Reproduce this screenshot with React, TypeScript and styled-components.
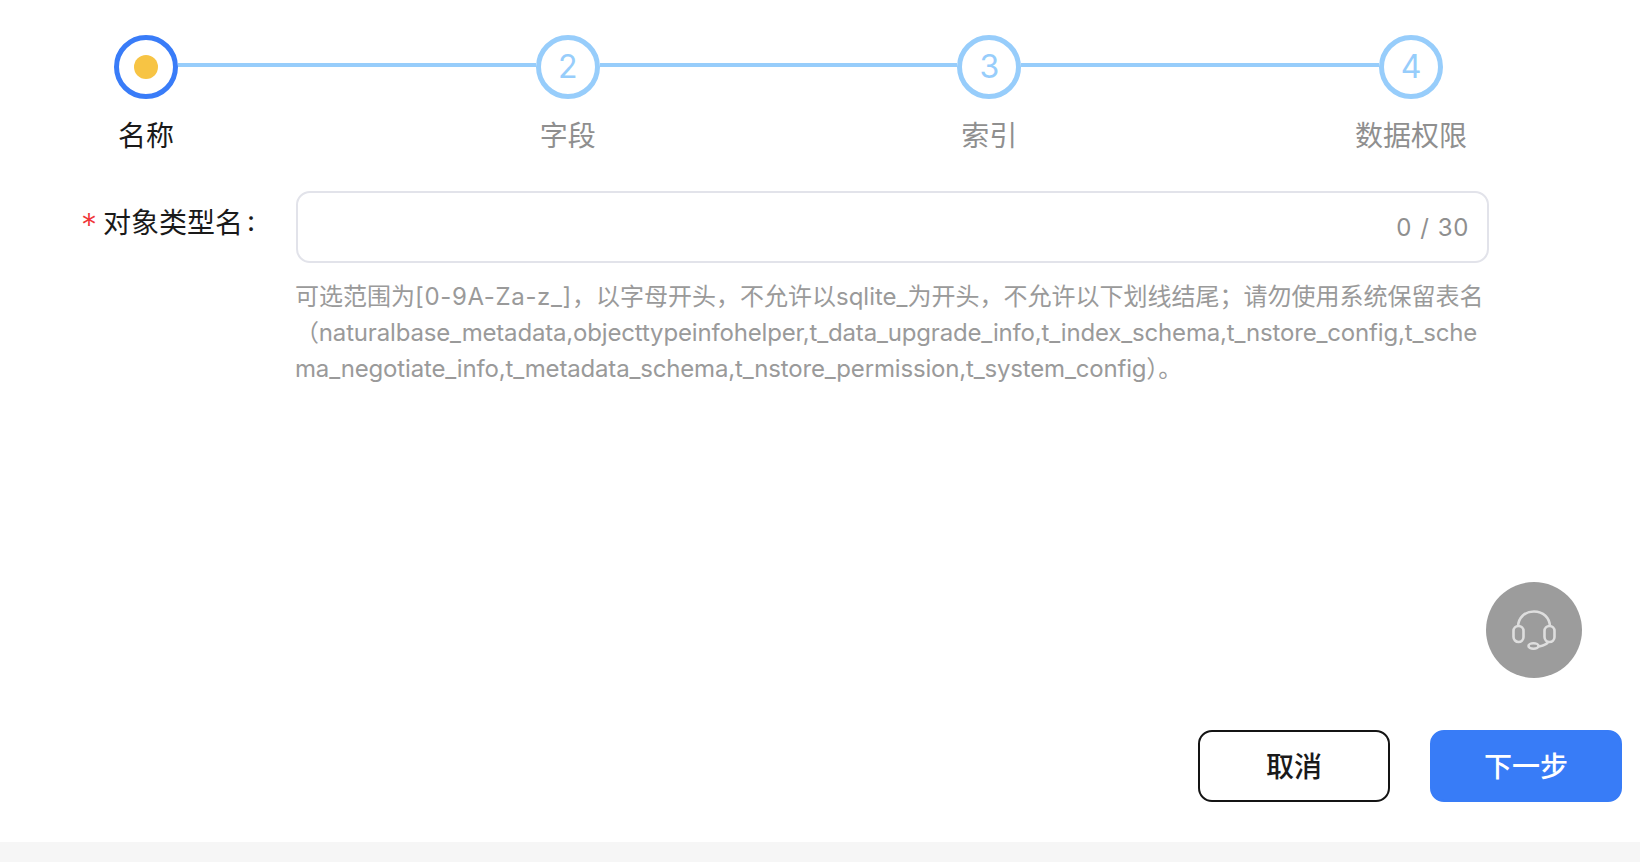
import { Fragment } from "react";
import styled, { createGlobalStyle } from "styled-components";

const GlobalStyle = createGlobalStyle`
  html, body {
    margin: 0;
    padding: 0;
    background: #fff;
  }
  * {
    box-sizing: border-box;
  }
`;

const FONT = `Inter, "Noto Sans CJK SC", sans-serif`;

const Page = styled.div`
  position: relative;
  display: flex;
  flex-direction: column;
  height: 862px;
  overflow: hidden;
  font-family: ${FONT};
`;

const Main = styled.main`
  flex: 1;
  display: flex;
  flex-direction: column;
  background: #fff;
`;

const Stepper = styled.div`
  display: flex;
  width: 1329px;
  margin: 35px 0 0 114px;
`;

const Step = styled.div`
  display: flex;
  flex-direction: column;
  align-items: center;
  width: 64px;
`;

const StepCircle = styled.div<{ $active?: boolean }>`
  display: flex;
  flex: none;
  align-items: center;
  justify-content: center;
  width: 64px;
  height: 64px;
  border-radius: 50%;
  border: 5.5px solid ${(p) => (p.$active ? "#397cf8" : "#97cdfb")};
  color: #97cdfb;
  font-size: 32px;
  line-height: 1;
`;

const StepDot = styled.span`
  width: 24px;
  height: 24px;
  border-radius: 50%;
  background: #f7c444;
`;

const StepLabel = styled.div<{ $active?: boolean }>`
  flex: none;
  margin-top: 17px;
  font-size: 28px;
  line-height: 40px;
  white-space: nowrap;
  color: ${(p) => (p.$active ? "#1a1a1a" : "#8f8f8f")};
`;

const Connector = styled.div`
  flex: 1;
  height: 4px;
  margin-top: 28px;
  background: #97cdfb;
`;

const FormRow = styled.div`
  display: grid;
  grid-template-columns: 214px 1194px;
  margin: 35px 0 0 81px;
`;

const FieldLabel = styled.label`
  display: flex;
  align-items: center;
  height: 40px;
  margin-top: 10px;
  font-size: 28px;
  color: #1a1a1a;
  white-space: nowrap;
`;

const Required = styled.span`
  width: 22px;
  height: 40px;
  color: #f0353a;
  font-size: 32px;
  font-weight: 300;
  line-height: 50px;
`;

const Colon = styled.span`
  margin-left: 4px;
`;

const InputBox = styled.div`
  display: flex;
  align-items: center;
  height: 72px;
  margin-left: 1px;
  padding: 0 18px 0 20px;
  border: 2px solid #e2e3ea;
  border-radius: 14px;
`;

const TextInput = styled.input`
  flex: 1;
  min-width: 0;
  border: 0;
  outline: 0;
  background: transparent;
  font: inherit;
`;

const Counter = styled.span`
  font-size: 24px;
  word-spacing: 1px;
  letter-spacing: 0.6px;
  color: #8f8f8f;
`;

const Help = styled.div`
  grid-column: 2;
  margin-top: 16px;
  font-size: 24px;
  line-height: 36px;
  color: #9a9a9a;
  white-space: nowrap;
`;

const HelpLine = styled.div<{ $tight?: boolean }>`
  letter-spacing: ${(p) => (p.$tight ? "-0.17px" : "0")};
`;

const CharRange = styled.span`
  letter-spacing: 0.65px;
`;

const Actions = styled.div`
  display: flex;
  justify-content: flex-end;
  gap: 40px;
  margin-top: auto;
  padding: 0 18px 40px 0;
`;

const Button = styled.button<{ $primary?: boolean }>`
  width: 192px;
  height: 72px;
  padding: 0 0 2px;
  border-radius: 14px;
  border: 2px solid ${(p) => (p.$primary ? "#387cf7" : "#141414")};
  background: ${(p) => (p.$primary ? "#387cf7" : "#fff")};
  color: ${(p) => (p.$primary ? "#fff" : "#1a1a1a")};
  font-family: ${FONT};
  font-size: 28px;
  font-weight: 500;
`;

const Fab = styled.button`
  position: absolute;
  left: 1486px;
  top: 582px;
  display: flex;
  align-items: center;
  justify-content: center;
  width: 96px;
  height: 96px;
  padding: 0;
  border: 0;
  border-radius: 50%;
  background: #9c9c9c;
`;

const BottomStrip = styled.div`
  flex: none;
  height: 20px;
  background: #f6f6f6;
`;

const steps = ["名称", "字段", "索引", "数据权限"];

const HeadsetIcon = () => (
  <svg width="44" height="40" viewBox="0 0 44 40" fill="none" stroke="#dedede" strokeWidth="2.6">
    <path d="M6 17C6 7.500 13 1.500 22 1.500s16 6 16 15.500" />
    <rect x="1.500" y="16" width="10" height="16" rx="5" />
    <rect x="32.500" y="16" width="10" height="16" rx="5" />
    <path d="M36 32c-1 2.500-4 3.500-9 4.500" />
    <ellipse cx="21.500" cy="36" rx="5" ry="2.700" />
  </svg>
);

export default function App() {
  return (
    <Page>
      <GlobalStyle />
      <Main>
        <Stepper>
          {steps.map((name, i) => (
            <Fragment key={name}>
              {i > 0 && <Connector />}
              <Step>
                <StepCircle $active={i === 0}>
                  {i === 0 ? <StepDot /> : i + 1}
                </StepCircle>
                <StepLabel $active={i === 0}>{name}</StepLabel>
              </Step>
            </Fragment>
          ))}
        </Stepper>

        <FormRow>
          <FieldLabel>
            <Required>*</Required>
            对象类型名<Colon>:</Colon>
          </FieldLabel>
          <InputBox>
            <TextInput />
            <Counter>0 / 30</Counter>
          </InputBox>
          <Help>
            <HelpLine>
              可选范围为<CharRange>[0-9A-Za-z_]</CharRange>，以字母开头，不允许以sqlite_为开头，不允许以下划线结尾；请勿使用系统保留表名
            </HelpLine>
            <HelpLine $tight>
              （naturalbase_metadata,objecttypeinfohelper,t_data_upgrade_info,t_index_schema,t_nstore_config,t_sche
            </HelpLine>
            <HelpLine $tight>
              ma_negotiate_info,t_metadata_schema,t_nstore_permission,t_system_config）。
            </HelpLine>
          </Help>
        </FormRow>

        <Actions>
          <Button>取消</Button>
          <Button $primary>下一步</Button>
        </Actions>
      </Main>
      <BottomStrip />
      <Fab>
        <HeadsetIcon />
      </Fab>
    </Page>
  );
}
